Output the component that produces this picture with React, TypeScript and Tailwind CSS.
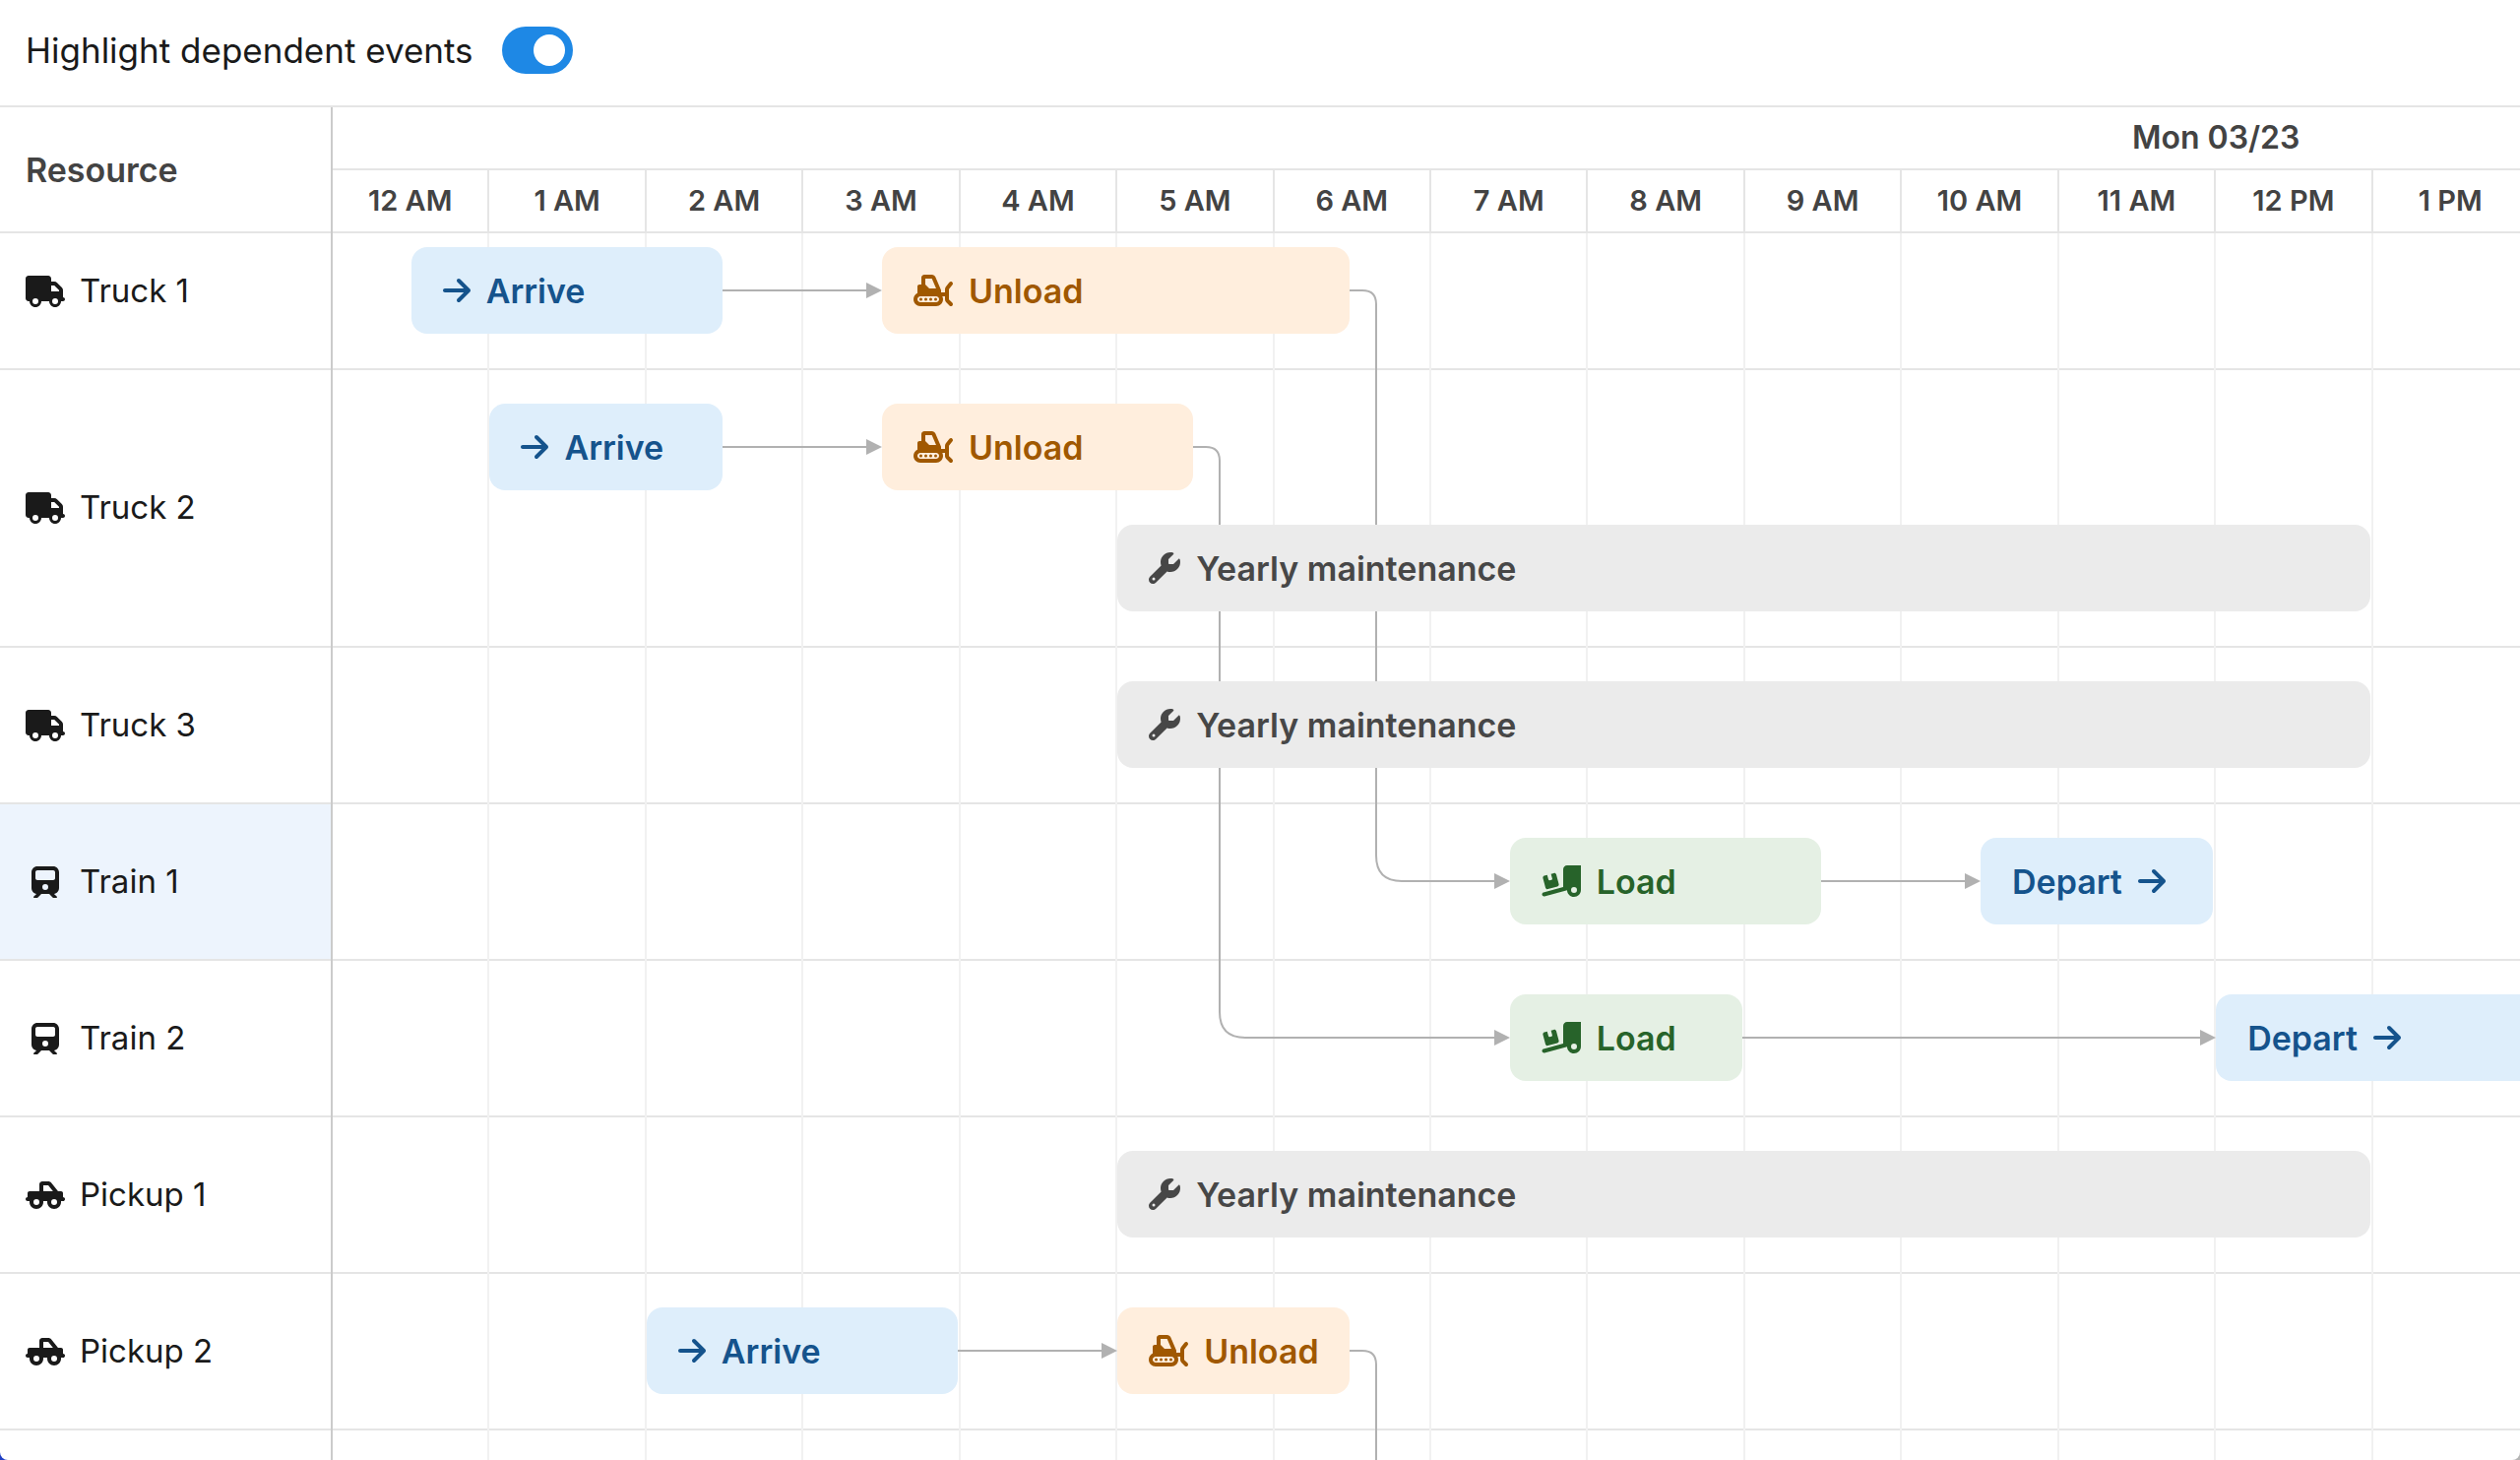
import { useLayoutEffect, useRef, useState } from "react";
import type { IconType } from "react-icons";
import { FaTruck, FaTrain, FaTruckPickup, FaSnowplow, FaWrench, FaArrowRight, FaTruckRampBox } from "react-icons/fa6";

type Kind = "arrive" | "unload" | "load" | "depart" | "maintenance";

// start and end are in half hours counted from midnight
type Event = { id: string; kind: Kind; start: number; end: number };
type Resource = { name: string; icon: IconType; size: string; active?: boolean; lanes: Event[][] };
type Link = { from: string; to: string | null };

const WIDE = "h-8 w-10";
const SQUARE = "h-8 w-8";
const NARROW = "h-8 w-7";

const KINDS: Record<Kind, { label: string; icon: IconType; size: string; trailing?: boolean; style: string }> = {
  arrive: { label: "Arrive", icon: FaArrowRight, size: NARROW, style: "bg-[#deeefb] text-[#15538c]" },
  depart: { label: "Depart", icon: FaArrowRight, size: NARROW, trailing: true, style: "bg-[#deeefb] text-[#15538c]" },
  unload: { label: "Unload", icon: FaSnowplow, size: WIDE, style: "bg-[#ffeedd] text-[#a05800]" },
  load: { label: "Load", icon: FaTruckRampBox, size: WIDE, style: "bg-[#e5f0e4] text-[#27632a]" },
  maintenance: { label: "Yearly maintenance", icon: FaWrench, size: SQUARE, style: "bg-[#ebebeb] text-[#474747]" },
};

const RESOURCES: Resource[] = [
  {
    name: "Truck 1",
    icon: FaTruck,
    size: WIDE,
    lanes: [[
      { id: "t1-arrive", kind: "arrive", start: 1, end: 5 },
      { id: "t1-unload", kind: "unload", start: 7, end: 13 },
    ]],
  },
  {
    name: "Truck 2",
    icon: FaTruck,
    size: WIDE,
    lanes: [
      [
        { id: "t2-arrive", kind: "arrive", start: 2, end: 5 },
        { id: "t2-unload", kind: "unload", start: 7, end: 11 },
      ],
      [{ id: "t2-service", kind: "maintenance", start: 10, end: 26 }],
    ],
  },
  {
    name: "Truck 3",
    icon: FaTruck,
    size: WIDE,
    lanes: [[{ id: "t3-service", kind: "maintenance", start: 10, end: 26 }]],
  },
  {
    name: "Train 1",
    icon: FaTrain,
    size: NARROW,
    active: true,
    lanes: [[
      { id: "r1-load", kind: "load", start: 15, end: 19 },
      { id: "r1-depart", kind: "depart", start: 21, end: 24 },
    ]],
  },
  {
    name: "Train 2",
    icon: FaTrain,
    size: NARROW,
    lanes: [[
      { id: "r2-load", kind: "load", start: 15, end: 18 },
      { id: "r2-depart", kind: "depart", start: 24, end: 30 },
    ]],
  },
  {
    name: "Pickup 1",
    icon: FaTruckPickup,
    size: WIDE,
    lanes: [[{ id: "p1-service", kind: "maintenance", start: 10, end: 26 }]],
  },
  {
    name: "Pickup 2",
    icon: FaTruckPickup,
    size: WIDE,
    lanes: [[
      { id: "p2-arrive", kind: "arrive", start: 4, end: 8 },
      { id: "p2-unload", kind: "unload", start: 10, end: 13 },
    ]],
  },
];

const LINKS: Link[] = [
  { from: "t1-arrive", to: "t1-unload" },
  { from: "t1-unload", to: "r1-load" },
  { from: "t2-arrive", to: "t2-unload" },
  { from: "t2-unload", to: "r2-load" },
  { from: "r1-load", to: "r1-depart" },
  { from: "r2-load", to: "r2-depart" },
  { from: "p2-arrive", to: "p2-unload" },
  { from: "p2-unload", to: null },
];

// The panel is wide enough for fourteen of the day's twenty-four columns
const HOURS = Array.from({ length: 14 }, (_, h) => `${h % 12 || 12} ${h < 12 ? "AM" : "PM"}`);

function Toolbar() {
  const [on, setOn] = useState(true);
  return (
    <div className="flex shrink-0 items-center border-b-2 border-[#e5e5e5] pt-[27px] pb-8 pl-[26px]">
      <label htmlFor="highlight" className="w-[484px] whitespace-nowrap text-[35px] leading-[48px]">
        Highlight dependent events
      </label>
      <input
        id="highlight"
        type="checkbox"
        role="switch"
        checked={on}
        onChange={(e) => setOn(e.target.checked)}
        className="h-12 w-18 appearance-none rounded-full bg-gray-400 p-2 before:block before:size-8 before:rounded-full before:bg-white checked:bg-[#1e88e5] checked:before:translate-x-6"
      />
    </div>
  );
}

function EventBar({ event }: { event: Event }) {
  const kind = KINDS[event.kind];
  const Icon = kind.icon;
  return (
    <button
      type="button"
      data-event={event.id}
      className={`relative z-10 row-start-1 mr-[3px] flex h-22 min-w-0 items-center gap-4 overflow-hidden rounded-2xl px-8 text-[34px] font-semibold whitespace-nowrap ${kind.trailing ? "flex-row-reverse justify-end" : ""} ${kind.style}`}
      style={{ gridColumn: `${event.start + 1} / ${event.end + 1}` }}
    >
      <Icon className={`shrink-0 ${kind.size}`} aria-hidden />
      <span>{kind.label}</span>
    </button>
  );
}

function connector(sx: number, sy: number, tx: number, ty: number) {
  if (Math.abs(sy - ty) < 1) return `M${sx} ${sy}H${tx - 14}`;
  return `M${sx} ${sy}h13q14 0 14 14V${ty - 26}q0 26 26 26H${tx - 14}`;
}

function Links() {
  const ref = useRef<SVGSVGElement>(null);
  const [shapes, setShapes] = useState<{ line: string; head: string }[]>([]);

  useLayoutEffect(() => {
    const svg = ref.current;
    if (!svg) return;
    const measure = () => {
      const base = svg.getBoundingClientRect();
      const box = (id: string) =>
        svg.parentElement?.querySelector(`[data-event="${id}"]`)?.getBoundingClientRect();
      setShapes(
        LINKS.flatMap(({ from, to }) => {
          const a = box(from);
          if (!a) return [];
          const sx = Math.round(a.right - base.left);
          const sy = Math.round(a.top + a.height / 2 - base.top);
          const b = to ? box(to) : undefined;
          if (!b) return [{ line: `M${sx} ${sy}h13q14 0 14 14V${base.height}`, head: "" }];
          const tx = Math.round(b.left - base.left);
          const ty = Math.round(b.top + b.height / 2 - base.top);
          return [{ line: connector(sx, sy, tx, ty), head: `M${tx} ${ty}l-16 -8v16z` }];
        }),
      );
    };
    measure();
    const observer = new ResizeObserver(measure);
    observer.observe(svg);
    return () => observer.disconnect();
  }, []);

  return (
    <svg ref={ref} className="pointer-events-none absolute inset-0 size-full" aria-hidden>
      {shapes.map((s, i) => (
        <g key={i}>
          <path d={s.line} fill="none" stroke="#b1b1b1" strokeWidth="2" />
          <path d={s.head} fill="#b1b1b1" />
        </g>
      ))}
    </svg>
  );
}

export default function App() {
  return (
    <div className="h-screen bg-linear-to-r from-[#1f3fc4] to-[#b5b5b5] font-['Inter',sans-serif] text-[#1a1a1a]">
      <div className="flex h-full flex-col overflow-hidden rounded-b-lg bg-white">
        <Toolbar />
        <div className="flex min-h-0 flex-1 overflow-hidden">
          <div className="flex w-[338px] shrink-0 flex-col border-r-2 border-[#cbcbcb]">
            <div className="flex h-32 shrink-0 items-center border-b-2 border-[#e5e5e5] pl-[26px] text-[34px] font-semibold text-[#434343]">
              Resource
            </div>
            {RESOURCES.map(({ name, icon: Icon, size, active, lanes }, i) => (
              <div
                key={name}
                className={`flex shrink-0 items-center gap-[15px] border-b-2 border-[#e5e5e5] pl-[26px] text-[33px] ${i === 0 ? "h-[139px] pb-5" : lanes.length > 1 ? "h-[282px]" : "h-[159px]"} ${active ? "bg-[#edf4fd]" : ""}`}
              >
                <span className="flex w-10 justify-center">
                  <Icon className={size} aria-hidden />
                </span>
                {name}
              </div>
            ))}
          </div>

          <div className="flex min-w-0 flex-1 flex-col overflow-hidden">
            <div className="flex w-[172.2%] flex-1 flex-col">
              <div className="flex h-16 shrink-0 items-center justify-center border-b-2 border-[#e5e5e5] text-[32px] font-semibold text-[#434343]">
                Mon 03/23
              </div>
              <div className="grid h-16 shrink-0 grid-cols-24 border-b-2 border-[#e5e5e5] text-[29px] font-semibold text-[#434343]">
                {HOURS.map((h) => (
                  <div key={h} className="flex items-center justify-center border-r-2 border-[#e5e5e5]">
                    {h}
                  </div>
                ))}
              </div>
              <div className="relative flex-1">
                {RESOURCES.map(({ name, lanes }, i) => (
                  <div
                    key={name}
                    className={`flex flex-col gap-[35px] border-b-2 border-[#e5e5e5] pb-[35px] ${i === 0 ? "pt-3.5" : "pt-[34px]"}`}
                  >
                    {lanes.map((lane, n) => (
                      <div key={n} className="grid grid-cols-48">
                        {lane.map((e) => (
                          <EventBar key={e.id} event={e} />
                        ))}
                      </div>
                    ))}
                  </div>
                ))}
                <div className="pointer-events-none absolute inset-0 grid grid-cols-24" aria-hidden>
                  {HOURS.map((h) => (
                    <div key={h} className="border-r-2 border-[#f1f1f1]" />
                  ))}
                </div>
                <Links />
              </div>
            </div>
          </div>
        </div>
      </div>
    </div>
  );
}
